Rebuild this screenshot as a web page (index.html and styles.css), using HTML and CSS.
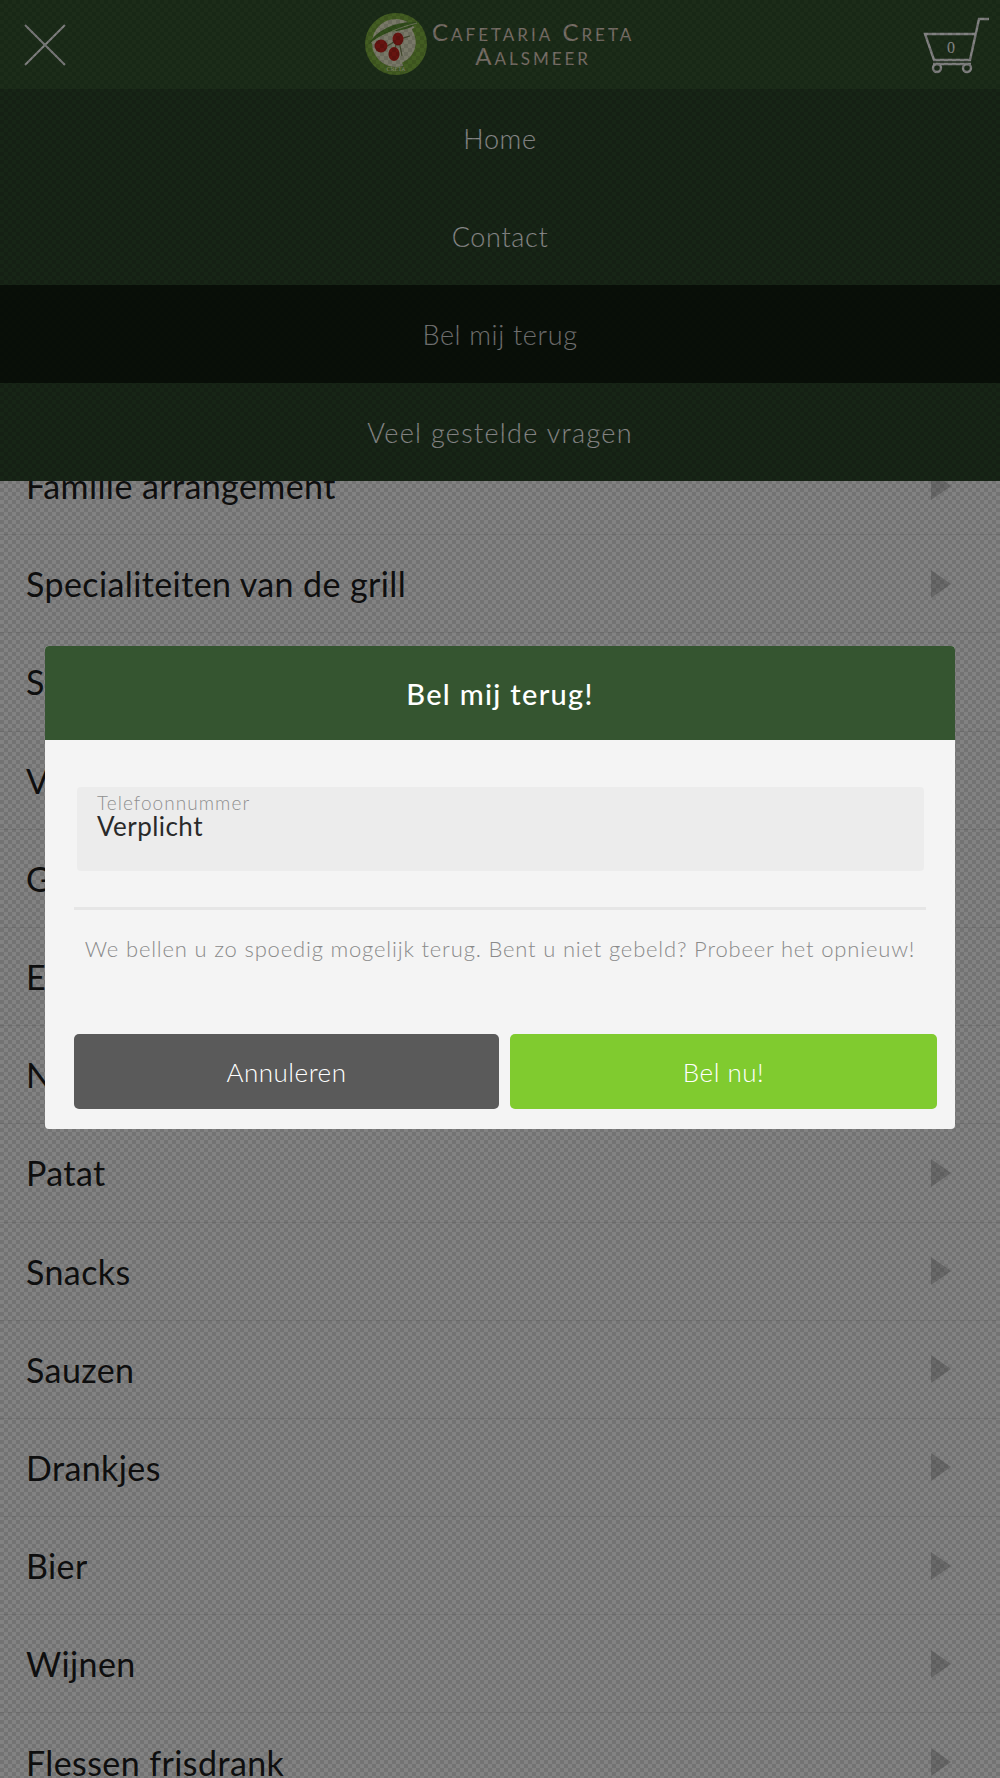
FILE: index.html
```html
<!DOCTYPE html>
<html lang="nl">
<head>
<meta charset="utf-8">
<title>Cafetaria Creta Aalsmeer</title>
<link rel="stylesheet" href="styles.css">
</head>
<body>
<div class="page">
  <ul class="list">
    <li class="row"><span>Familie arrangement</span><i class="arrow"></i></li>
    <li class="row"><span>Specialiteiten van de grill</span><i class="arrow"></i></li>
    <li class="row"><span>Schotels</span><i class="arrow"></i></li>
    <li class="row"><span>Vlees</span><i class="arrow"></i></li>
    <li class="row"><span>Gerechten</span><i class="arrow"></i></li>
    <li class="row"><span>Extra</span><i class="arrow"></i></li>
    <li class="row"><span>Nasi</span><i class="arrow"></i></li>
    <li class="row"><span>Patat</span><i class="arrow"></i></li>
    <li class="row"><span>Snacks</span><i class="arrow"></i></li>
    <li class="row"><span>Sauzen</span><i class="arrow"></i></li>
    <li class="row"><span>Drankjes</span><i class="arrow"></i></li>
    <li class="row"><span>Bier</span><i class="arrow"></i></li>
    <li class="row"><span>Wijnen</span><i class="arrow"></i></li>
    <li class="row"><span>Flessen frisdrank</span><i class="arrow"></i></li>
  </ul>

  <div class="drawer">
    <header class="topbar">
      <svg class="close" width="44" height="44" viewBox="0 0 44 44"><path d="M2 2 L42 42 M42 2 L2 42" fill="none" stroke="#f4f4f4" stroke-width="2"/></svg>
      <div class="brand">
        <svg class="seal" width="62" height="62" viewBox="0 0 62 62">
          <circle cx="31" cy="31" r="31" fill="#7fb040"/>
          <circle cx="31" cy="30" r="24" fill="#e4e4c4"/>
          <path d="M3 32 C12 16 30 8 54 9 C44 17 36 17 26 19 C18 21 10 26 3 32 Z" fill="#5f9434"/>
          <path d="M6 30 C20 20 36 14 52 10" fill="none" stroke="#d5e0b0" stroke-width="1"/>
          <path d="M49 15 C58 30 52 46 38 52" fill="none" stroke="#7fb040" stroke-width="5"/>
          <path d="M19 35 L32 27 L45 23 M29 40 L32 27 M37 43 L34 27" fill="none" stroke="#7c8a55" stroke-width="1.2"/>
          <ellipse cx="16" cy="33" rx="6.5" ry="6.5" fill="#c2261e"/>
          <ellipse cx="33" cy="26" rx="5.5" ry="6.5" fill="#c2261e"/>
          <ellipse cx="29" cy="41" rx="5.5" ry="7" fill="#c2261e"/>
          <text class="seal-text" x="31" y="58" text-anchor="middle">CRETA</text>
        </svg>
        <div class="brand-name"><span>Cafetaria Creta</span><span>Aalsmeer</span></div>
      </div>
      <div class="cart">
        <svg width="68" height="58" viewBox="0 0 68 58"><g fill="none" stroke="#f4f4f4" stroke-width="2.4"><path d="M66 3 H56 L47 44 H11 L2 18 H52"/><path d="M10 48 H48"/><circle cx="14" cy="52" r="4"/><circle cx="44" cy="52" r="4"/></g></svg>
        <span class="cart-count">0</span>
      </div>
    </header>
    <nav class="menu">
      <a class="menu-item">Home</a>
      <a class="menu-item">Contact</a>
      <a class="menu-item menu-item-active">Bel mij terug</a>
      <a class="menu-item menu-item-wide">Veel gestelde vragen</a>
    </nav>
  </div>

  <div class="overlay"></div>

  <section class="modal">
    <h2 class="modal-title">Bel mij terug!</h2>
    <div class="modal-body">
      <div class="field">
        <span class="field-label">Telefoonnummer</span>
        <span class="field-value">Verplicht</span>
      </div>
      <hr class="divider">
      <p class="help">We bellen u zo spoedig mogelijk terug. Bent u niet gebeld? Probeer het opnieuw!</p>
      <div class="actions">
        <button class="btn btn-cancel">Annuleren</button>
        <button class="btn btn-call">Bel nu!</button>
      </div>
    </div>
  </section>
</div>
</body>
</html>
```
FILE: styles.css
```css
* { box-sizing: border-box; }
html, body { margin: 0; padding: 0; }
body { font-family: Lato, "Noto Sans", sans-serif; background: #f5f5f5; }

.page { position: relative; width: 1000px; height: 1778px; overflow: hidden; background: #f5f5f5; }

.list { list-style: none; margin: 0; padding: 437px 0 0; }
.row {
  height: 98.2px;
  display: flex;
  align-items: center;
  justify-content: space-between;
  padding: 0 49px 0 26px;
  font-size: 34px;
  font-weight: 400;
  letter-spacing: .4px;
  color: #1c1c1c;
  border-bottom: 1px solid #e2e2e2;
}
.arrow {
  width: 0;
  height: 0;
  border-left: 20px solid #c8c8c8;
  border-top: 14px solid transparent;
  border-bottom: 14px solid transparent;
}

.drawer { position: absolute; top: 0; left: 0; width: 100%; }
.topbar {
  position: relative;
  height: 89px;
  display: flex;
  align-items: center;
  justify-content: space-between;
  padding: 0 9px 0 23px;
  background: #34542f;
}
.close { margin-top: 1px; }
.brand { display: flex; align-items: center; gap: 5px; position: absolute; left: 365px; top: 13px; }
.seal-text { font-family: "Liberation Serif", serif; font-size: 6px; fill: #eef3d0; }
.brand-name {
  display: flex;
  flex-direction: column;
  align-items: center;
  font-family: Lato, "Noto Sans", sans-serif;
  font-variant: small-caps;
  font-size: 24px;
  line-height: 24px;
  letter-spacing: 3px;
  color: #e0d0c2;
}
.cart { position: relative; }
.cart svg { display: block; }
.cart-count {
  position: absolute;
  left: 22px;
  top: 22px;
  width: 12px;
  text-align: center;
  font-family: "Liberation Serif", serif;
  font-size: 16px;
  line-height: 20px;
  color: #fff;
}

.menu { display: flex; flex-direction: column; background: #294228; }
.menu-item {
  height: 98px;
  display: flex;
  align-items: center;
  justify-content: center;
  font-size: 27px;
  font-weight: 300;
  letter-spacing: .65px;
  color: #fff;
  background: #2c452a;
}
.menu-item-wide { letter-spacing: 1.3px; }
.menu-item-active { background: #111d10; color: #d8d8d8; }

.overlay {
  position: absolute;
  inset: 0;
  background: repeating-conic-gradient(rgba(0,0,0,.47) 0 25%, rgba(0,0,0,.53) 0 50%) 0 0 / 8px 8px;
}

.modal {
  position: absolute;
  left: 45px;
  top: 646px;
  width: 910px;
  height: 483px;
  background: #f4f4f4;
  border-radius: 4px;
  overflow: hidden;
}
.modal-title {
  margin: 0;
  height: 94px;
  display: flex;
  align-items: center;
  justify-content: center;
  background: #355530;
  color: #fff;
  font-size: 29px;
  font-weight: 500;
  letter-spacing: 1.3px;
}
.modal-body { padding: 47px 18px 0 29px; }
.field {
  display: flex;
  flex-direction: column;
  width: 847px;
  height: 84px;
  margin-left: 3px;
  padding: 6px 20px;
  background: #ececec;
  border-radius: 4px;
}
.field-label { font-size: 19px; line-height: 20px; font-weight: 300; color: #8f8f8f; letter-spacing: 1.05px; }
.field-value { font-size: 26px; line-height: 26px; color: #2a2a2a; font-weight: 400; letter-spacing: .45px; }
.divider { margin: 36px 0 0; border: 0; height: 3px; background: #e6e6e6; width: 852px; }
.help {
  margin: 25px 0 0;
  height: 99px;
  width: 852px;
  text-align: center;
  white-space: nowrap;
  font-size: 22px;
  line-height: 28px;
  font-weight: 300;
  letter-spacing: .82px;
  color: #8a8a8a;
}
.actions { display: flex; gap: 11px; }
.btn {
  height: 75px;
  border: 0;
  border-radius: 5px;
  color: #fff;
  font: 300 26px Lato, "Noto Sans", sans-serif;
  letter-spacing: .5px;
}
.btn-cancel { width: 425px; background: #5a5a5a; }
.btn-call { width: 427px; background: #80cb2f; }
```
